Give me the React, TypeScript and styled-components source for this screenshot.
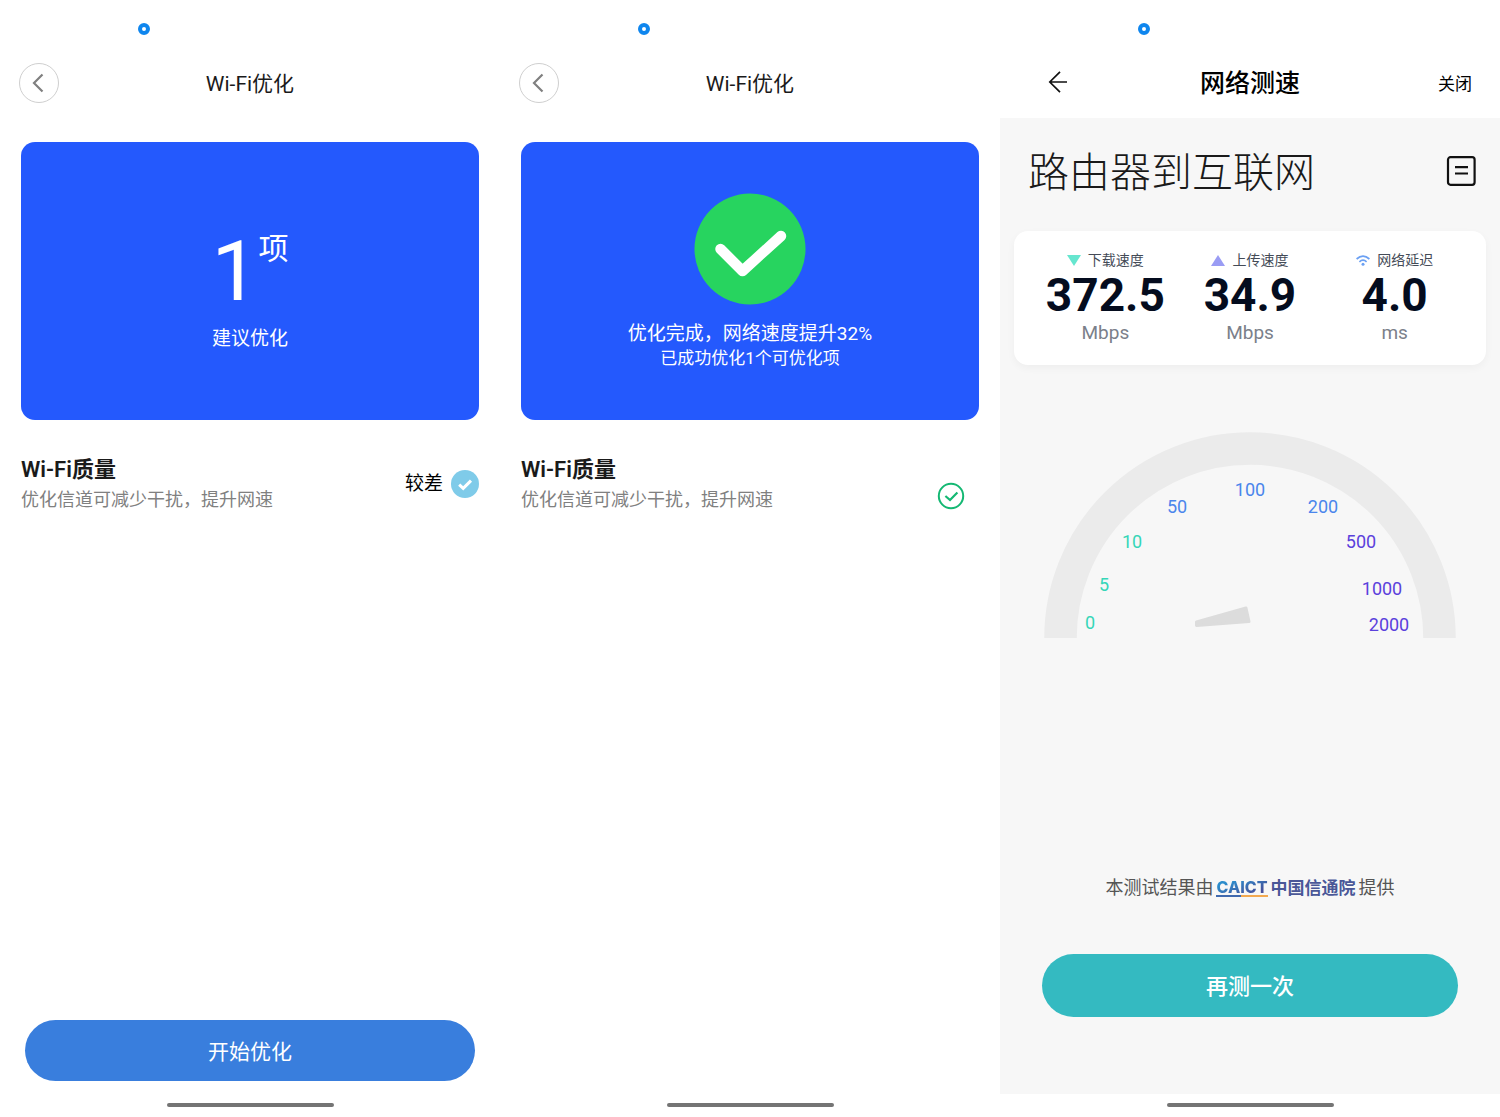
import React from "react";
import styled, { createGlobalStyle } from "styled-components";

const GlobalStyle = createGlobalStyle`
  *, *::before, *::after { box-sizing: border-box; }
  body {
    margin: 0;
    background: #fff;
    color: #1a1a1a;
    font-family: Roboto, "Noto Sans CJK SC", sans-serif;
  }
  h1, h2, h3, p, dl, dt, dd { margin: 0; font-weight: 400; }
  button { font: inherit; border: 0; padding: 0; background: none; cursor: pointer; }
  svg { display: block; flex: none; }
`;

const Page = styled.div`
  display: grid;
  grid-template-columns: repeat(3, minmax(0, 1fr));
  min-height: 100vh;
`;

const Phone = styled.section`
  display: flex;
  flex-direction: column;
`;

const StatusBar = styled.div`
  height: 58px;
  padding: 23px 0 0 138px;
`;

const Camera = styled.span`
  display: block;
  width: 12px;
  height: 12px;
  border-radius: 50%;
  border: 4px solid #0f86ee;
  background: #fff;
`;

const Header = styled.header<{ $height: number; $padding: string }>`
  display: grid;
  grid-template-columns: 1fr auto 1fr;
  align-items: center;
  height: ${(p) => p.$height}px;
  padding: ${(p) => p.$padding};
`;

const RoundBack = styled.button`
  display: grid;
  place-items: center;
  width: 40px;
  height: 40px;
  padding-right: 2px;
  border: 1px solid #cfcfcf;
  border-radius: 50%;
`;

const Title = styled.h1`
  padding-top: 2px;
  font-size: 21px;
  line-height: 28px;
`;

const Body = styled.main`
  flex: 1;
  display: flex;
  flex-direction: column;
  padding: 34px 21px 13px;
`;

const Hero = styled.div`
  display: flex;
  flex-direction: column;
  align-items: center;
  height: 278px;
  border-radius: 14px;
  background: #2459fd;
  color: #fff;
`;

const Count = styled.div`
  display: flex;
  align-items: flex-start;
  padding-top: 88px;
`;

const CountNumber = styled.span`
  font-size: 84px;
  line-height: 84px;
`;

const CountUnit = styled.span`
  font-size: 30px;
  line-height: 38px;
`;

const HeroText = styled.p`
  margin-top: 12px;
  font-size: 19px;
  line-height: 26px;
`;

const HeroNote = styled.p`
  font-size: 17px;
  line-height: 22px;
`;

const Badge = styled.div`
  padding: 51px 0 4px;
`;

const Item = styled.div<{ $align: string; $inset: number }>`
  display: flex;
  justify-content: space-between;
  align-items: ${(p) => p.$align};
  margin-top: 36px;
  padding-right: ${(p) => p.$inset}px;
`;

const ItemTitle = styled.h2`
  font-size: 22px;
  line-height: 28px;
  font-weight: 600;
`;

const ItemText = styled.p`
  font-size: 18px;
  line-height: 32px;
  color: #808080;
`;

const Rating = styled.label`
  display: flex;
  align-items: center;
  gap: 8px;
  padding-bottom: 4px;
  font-size: 19px;
  line-height: 26px;
  color: #000;
`;

const Tick = styled.span`
  display: grid;
  width: 28px;
  height: 28px;
  & > * { grid-area: 1 / 1; }
`;

const TickInput = styled.input`
  appearance: none;
  width: 28px;
  height: 28px;
  margin: 0;
  border-radius: 50%;
  background: #c8c8c8;
  &:checked { background: #7fcbe9; }
`;

const TickMark = styled.svg`
  pointer-events: none;
`;

const StartButton = styled.button`
  height: 61px;
  margin: auto 4px 0;
  padding-bottom: 2px;
  border-radius: 31px;
  background: #397edd;
  color: #fff;
  font-size: 21px;
`;

const HomeArea = styled.div`
  display: grid;
  place-items: center;
  height: 23px;
  padding-bottom: 2px;
`;

const HomeBar = styled.span`
  width: 167px;
  height: 4px;
  border-radius: 2px;
  background: #747474;
`;

const BackButton = styled.button`
  justify-self: start;
  color: #111;
`;

const SpeedTitle = styled.h1`
  padding-top: 4px;
  font-size: 25px;
  line-height: 32px;
  font-weight: 500;
  color: #000;
`;

const CloseButton = styled.button`
  justify-self: end;
  font-size: 17px;
  color: #000;
`;

const SpeedBody = styled.main`
  flex: 1;
  display: flex;
  flex-direction: column;
  padding: 22px 14px 77px;
  background: #f7f7f7;
`;

const SpeedHeading = styled.div`
  display: flex;
  justify-content: space-between;
  align-items: center;
  padding: 0 10px 0 14px;
`;

const Route = styled.h2`
  padding-top: 4px;
  font-size: 41px;
  line-height: 58px;
  font-weight: 300;
`;

const Stats = styled.dl`
  display: grid;
  grid-template-columns: repeat(3, 1fr);
  margin-top: 29px;
  padding: 18px 19px;
  border-radius: 14px;
  background: #fff;
  box-shadow: 0 3px 8px rgba(0, 0, 0, 0.04);
`;

const Stat = styled.div`
  text-align: center;
`;

const StatLabel = styled.dt`
  display: flex;
  justify-content: center;
  align-items: center;
  gap: 7px;
  font-size: 14px;
  line-height: 22px;
  color: #444b57;
`;

const StatValue = styled.dd`
  font-size: 46px;
  line-height: 48px;
  font-weight: 700;
  color: #040c1e;
`;

const StatUnit = styled.dd`
  font-size: 19px;
  line-height: 28px;
  color: #7b808a;
`;

const Gauge = styled.svg`
  align-self: center;
  margin-top: 67px;
  font-size: 18px;
  text-anchor: middle;
`;

const Credit = styled.p`
  display: flex;
  justify-content: center;
  align-items: center;
  gap: 3px;
  margin-top: auto;
  font-size: 18px;
  line-height: 28px;
  color: #555;
`;

const Caict = styled.b`
  padding-bottom: 1px;
  border-bottom: 2px solid;
  border-image: linear-gradient(90deg, #4069ae 48%, #f3a950 48%) 1;
  font-family: Inter, sans-serif;
  font-size: 16px;
  line-height: 14px;
  font-weight: 800;
  background: linear-gradient(160deg, #2c8dcc 20%, #47519b 80%);
  background-clip: text;
  color: transparent;
`;

const Academy = styled.b`
  font-size: 17px;
  font-weight: 700;
  color: #4a5797;
`;

const AgainButton = styled.button`
  height: 63px;
  margin: 52px 28px 0;
  padding-bottom: 4px;
  border-radius: 32px;
  background: #34bac1;
  color: #fff;
  font-size: 22px;
  font-weight: 500;
`;

const TEAL = "#35d6b8";
const BLUE = "#4a86ec";
const PURPLE = "#5b41dc";

const marks = [
  { label: "0", x: 46, y: 197, color: TEAL },
  { label: "5", x: 60, y: 159, color: TEAL },
  { label: "10", x: 88, y: 116, color: TEAL },
  { label: "50", x: 133, y: 81, color: BLUE },
  { label: "100", x: 206, y: 64, color: BLUE },
  { label: "200", x: 279, y: 81, color: BLUE },
  { label: "500", x: 317, y: 116, color: PURPLE },
  { label: "1000", x: 338, y: 163, color: PURPLE },
  { label: "2000", x: 345, y: 199, color: PURPLE },
];

const DownIcon = () => (
  <svg width="14" height="11" viewBox="0 0 14 11">
    <path d="M0 0H14L7 11Z" fill="#66e6cf" />
  </svg>
);

const UpIcon = () => (
  <svg width="14" height="11" viewBox="0 0 14 11">
    <path d="M7 0L14 11H0Z" fill="#9a9cf4" />
  </svg>
);

const WifiIcon = () => (
  <svg width="14" height="11" viewBox="0 0 14 11" fill="none" stroke="#6ba0f3" strokeWidth="1.7">
    <path d="M.6 4Q7-1.8 13.4 4M3.4 6.8Q7 3.6 10.6 6.8" />
    <circle cx="7" cy="9.2" r="1.5" fill="#6ba0f3" stroke="none" />
  </svg>
);

const stats = [
  { label: "下载速度", value: "372.5", unit: "Mbps", icon: <DownIcon /> },
  { label: "上传速度", value: "34.9", unit: "Mbps", icon: <UpIcon /> },
  { label: "网络延迟", value: "4.0", unit: "ms", icon: <WifiIcon /> },
];

const Status = () => (
  <StatusBar>
    <Camera />
  </StatusBar>
);

const Home = () => (
  <HomeArea>
    <HomeBar />
  </HomeArea>
);

const WifiHeader = () => (
  <Header $height={50} $padding="0 19px">
    <RoundBack aria-label="返回">
      <svg width="12" height="20" viewBox="0 0 12 20" fill="none" stroke="#808080" strokeWidth="2.2">
        <path d="M10.5 1.5L2 10L10.5 18.5" />
      </svg>
    </RoundBack>
    <Title>Wi-Fi优化</Title>
  </Header>
);

const QualityText = () => (
  <div>
    <ItemTitle>Wi-Fi质量</ItemTitle>
    <ItemText>优化信道可减少干扰，提升网速</ItemText>
  </div>
);

export default function App() {
  return (
    <Page lang="zh-CN">
      <GlobalStyle />

      <Phone>
        <Status />
        <WifiHeader />
        <Body>
          <Hero>
            <Count>
              <CountNumber>1</CountNumber>
              <CountUnit>项</CountUnit>
            </Count>
            <HeroText>建议优化</HeroText>
          </Hero>
          <Item $align="center" $inset={0}>
            <QualityText />
            <Rating>
              较差
              <Tick>
                <TickInput type="checkbox" defaultChecked />
                <TickMark width="28" height="28" viewBox="0 0 28 28" fill="none" stroke="#fff" strokeWidth="3">
                  <path d="M8.2 14.6L12.2 18.4L20 10.6" />
                </TickMark>
              </Tick>
            </Rating>
          </Item>
          <StartButton>开始优化</StartButton>
        </Body>
        <Home />
      </Phone>

      <Phone>
        <Status />
        <WifiHeader />
        <Body>
          <Hero>
            <Badge>
              <svg width="112" height="112" viewBox="0 0 112 112">
                <circle cx="56" cy="56" r="55.5" fill="#27d45f" />
                <path
                  d="M26.5 56L48.5 78L87 43"
                  fill="none"
                  stroke="#fff"
                  strokeWidth="10.5"
                  strokeLinecap="round"
                  strokeLinejoin="round"
                />
              </svg>
            </Badge>
            <HeroText>优化完成，网络速度提升32%</HeroText>
            <HeroNote>已成功优化1个可优化项</HeroNote>
          </Hero>
          <Item $align="flex-end" $inset={14}>
            <QualityText />
            <svg width="28" height="36" viewBox="0 0 28 36" fill="none" stroke="#14b873">
              <circle cx="14" cy="16" r="12.2" strokeWidth="2" />
              <path d="M8.4 16L13 20L20.4 12.4" strokeWidth="2.2" />
            </svg>
          </Item>
        </Body>
        <Home />
      </Phone>

      <Phone>
        <Status />
        <Header $height={60} $padding="0 28px 12px">
          <BackButton aria-label="返回">
            <svg width="40" height="22" viewBox="-20 0 40 22" fill="none" stroke="currentColor" strokeWidth="1.7">
              <path d="M19 11H2M12 .8L1.8 11L12 21.2" />
            </svg>
          </BackButton>
          <SpeedTitle>网络测速</SpeedTitle>
          <CloseButton>关闭</CloseButton>
        </Header>
        <SpeedBody>
          <SpeedHeading>
            <Route>路由器到互联网</Route>
            <BackButton aria-label="测速记录">
              <svg width="30" height="30" viewBox="0 0 30 30" fill="none" stroke="currentColor" strokeWidth="2.2">
                <rect x="2" y="1.2" width="26.6" height="27.6" rx="2.5" />
                <path d="M9 11.2H22M9 17.5H22" />
              </svg>
            </BackButton>
          </SpeedHeading>
          <Stats>
            {stats.map((s) => (
              <Stat key={s.label}>
                <StatLabel>
                  {s.icon}
                  {s.label}
                </StatLabel>
                <StatValue>{s.value}</StatValue>
                <StatUnit>{s.unit}</StatUnit>
              </Stat>
            ))}
          </Stats>
          <Gauge width="412" height="206" viewBox="0 0 412 206">
            <path d="M16.5 206A189.5 189.5 0 0 1 395.5 206" fill="none" stroke="#ebebeb" strokeWidth="32.5" />
            {marks.map((m) => (
              <text key={m.label} x={m.x} y={m.y} fill={m.color}>
                {m.label}
              </text>
            ))}
            <path
              d="M152.5 190L202 176L205 189.5L152.5 193.5Z"
              fill="#dcdcdc"
              stroke="#dcdcdc"
              strokeWidth="3"
              strokeLinejoin="round"
            />
          </Gauge>
          <Credit>
            本测试结果由
            <Caict>CAICT</Caict>
            <Academy>中国信通院</Academy>
            提供
          </Credit>
          <AgainButton>再测一次</AgainButton>
        </SpeedBody>
        <Home />
      </Phone>
    </Page>
  );
}
